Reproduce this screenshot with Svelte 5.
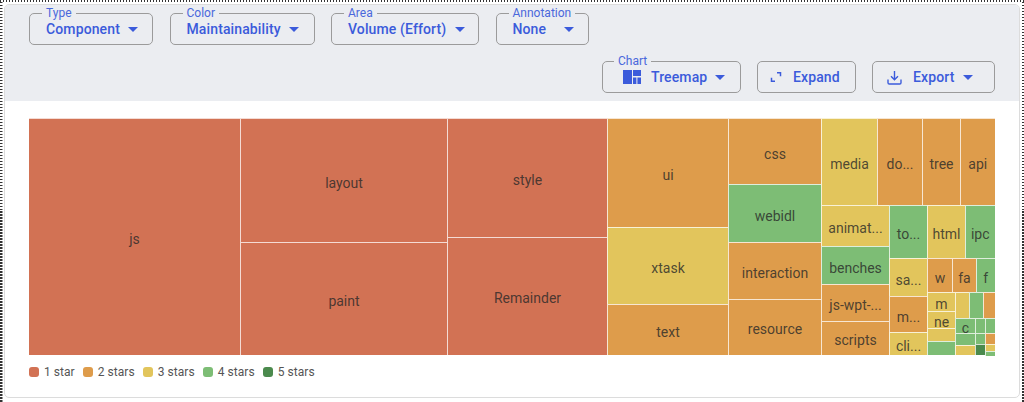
<script>
  const R = '#d27254', O = '#de9c4b', Y = '#e2c55c', G = '#7dbd75', D = '#4b8a4d';
  const X0 = 29, Y0 = 118;
  const raw = [
    [29,118,240,355,R,'js'],[240,118,447,242,R,'layout'],[240,242,447,355,R,'paint'],
    [447,118,607,237,R,'style'],[447,237,607,355,R,'Remainder'],
    [607,118,728,227,O,'ui'],[607,227,728,304,Y,'xtask'],[607,304,728,355,O,'text'],
    [728,118,821,184,O,'css'],[728,184,821,242,G,'webidl'],[728,242,821,299,O,'interaction'],[728,299,821,355,O,'resource'],
    [821,118,877,205,Y,'media'],[877,118,922,205,O,'do...'],[922,118,960,205,O,'tree'],[960,118,995,205,O,'api'],
    [821,205,889,246,Y,'animat...'],[821,246,889,284,G,'benches'],[821,284,889,321,O,'js-wpt-...'],[821,321,889,355,O,'scripts'],
    [889,205,927,258,G,'to...'],[889,258,927,296,Y,'sa...'],[889,296,927,332,O,'m...'],[889,332,927,355,Y,'cli...'],
    [927,205,965,258,Y,'html'],[965,205,995,258,G,'ipc'],
    [927,258,952,292,O,'w'],[952,258,976,292,O,'fa'],[976,258,995,292,G,'f'],
    [927,292,955,311,Y,'m'],[927,311,955,328,Y,'ne'],[927,328,955,341,Y,''],[927,341,955,355,G,''],
    [955,292,969,318,Y,''],[969,292,983,318,G,''],[983,292,995,318,O,''],
    [955,318,975,333,G,'c'],[975,318,985,333,G,''],[985,318,995,333,G,''],
    [955,333,975,345,G,''],[975,333,985,344,G,''],[985,333,995,344,O,''],
    [955,345,975,355,Y,''],[975,344,985,355,D,''],[985,344,995,351,Y,''],[985,351,995,355,G,'']
  ];
  const cells = raw.map(([a,b,c,d,color,label]) => ({
    left: a - X0, top: b - Y0,
    width: Math.min(c, 994.5) - a, height: Math.min(d, 354.5) - b,
    color, label, first: a === X0
  }));
  const legend = [['1 star',R],['2 stars',O],['3 stars',Y],['4 stars',G],['5 stars',D]];
</script>

{#snippet caret()}
  <svg class="caret" width="10" height="5" viewBox="0 0 10 5"><path d="M0 0h10L5 5z" fill="currentColor"/></svg>
{/snippet}

<div class="frame">
  <div class="card">
    <div class="toolbar">
      <div class="row">
        <fieldset class="type"><legend>Type</legend><span class="val">Component</span>{@render caret()}</fieldset>
        <fieldset class="color"><legend>Color</legend><span class="val">Maintainability</span>{@render caret()}</fieldset>
        <fieldset class="area"><legend>Area</legend><span class="val">Volume (Effort)</span>{@render caret()}</fieldset>
        <fieldset class="anno"><legend>Annotation</legend><span class="val">None</span>{@render caret()}</fieldset>
      </div>
      <div class="row end">
        <fieldset class="chart"><legend>Chart</legend>
          <svg class="ico" width="18" height="14" viewBox="0 0 18 14"><path d="M0 0h9v14H0zM10 0h8v6h-8zM10 7.5h3.4V14H10zM14.4 7.5H18V14h-3.6z" fill="currentColor"/></svg>
          <span class="val">Treemap</span>{@render caret()}
        </fieldset>
        <button class="expand">
          <svg class="ico" width="12" height="12" viewBox="0 0 12 12"><path d="M7 1.7h3.5v3.6M1.5 6.7v3.6H5" fill="none" stroke="currentColor" stroke-width="1.5"/></svg>
          <span class="val">Expand</span>
        </button>
        <button class="export">
          <svg class="ico" width="15" height="15" viewBox="0 0 15 15"><path d="M7.5 1v8.5M4 6.2l3.5 3.5L11 6.2M1 9.5v3.2q0 1.3 1.3 1.3h10.4q1.3 0 1.3-1.3V9.5" fill="none" stroke="currentColor" stroke-width="1.4"/></svg>
          <span class="val">Export</span>{@render caret()}
        </button>
      </div>
    </div>
    <div class="body">
      <div class="map">
        {#each cells as c}
          <div class="cell" class:first={c.first} style="left:{c.left}px;top:{c.top}px;width:{c.width}px;height:{c.height}px;background:{c.color}">{c.label}</div>
        {/each}
      </div>
      <div class="legend">
        {#each legend as [name, color]}
          <div class="item"><i style="background:{color}"></i>{name}</div>
        {/each}
      </div>
    </div>
  </div>
</div>

<style>
  :global(body) { margin: 0; background: #fff; overflow: hidden; }
  .frame {
    box-sizing: border-box; width: 1024px; height: 402px; padding: 4px 4px 0;
    background:
      repeating-linear-gradient(90deg, #333 0 1.5px, #fff 1.5px 3px) left top / 100% 2px no-repeat,
      repeating-linear-gradient(0deg, #333 0 1.5px, #fff 1.5px 3px) left top / 2.5px 100% no-repeat,
      repeating-linear-gradient(0deg, #333 0 1.5px, #fff 1.5px 3px) right top / 2px 100% no-repeat,
      #fff;
    font-family: Roboto, "Liberation Sans", sans-serif;
  }
  .card {
    box-sizing: border-box; height: 394px; border: 1px solid #dcdcdc; border-radius: 5px; overflow: hidden; background: #fff;
  }
  .toolbar { box-sizing: border-box; height: 96px; background: #ebedf1; padding: 2px 24px 0; }
  .row { display: flex; gap: 16.5px; }
  .end { justify-content: flex-end; margin-top: 10px; gap: 16px; }
  fieldset, button {
    box-sizing: border-box; margin: 0; height: 32px; padding: 0 0 0 16px; display: flex; align-items: center;
    border: 1px solid #9b9b9b; border-radius: 5px; background: transparent; color: #3b5bdb;
    font-family: inherit;
  }
  fieldset { height: 38px; padding-bottom: 5px; position: relative; }
  legend { font-size: 12px; line-height: 12px; padding: 0 4px; margin-left: -4px; color: #4a68dc; }
  .val { font-size: 14px; font-weight: 500; letter-spacing: 0.12px; line-height: 18px; white-space: nowrap; }
  .caret { margin-left: 8.5px; flex: none; }
  .type { width: 124px; }
  .color { width: 145px; }
  .area { width: 148px; }
  .anno { width: 93px; }
  .anno .caret { margin-left: 18px; }
  .chart { width: 139px; padding-left: 20px; }
  .chart legend { margin-left: -9px; }
  .chart .val { margin-left: 10px; }
  .chart .caret { margin-left: 8px; }
  button { margin-top: 6px; }
  .expand { width: 99px; padding-left: 12px; }
  .expand .val { margin-left: 11px; }
  .export { width: 123px; padding-left: 14px; }
  .export .val { margin-left: 11px; }
  .body { padding: 17px 24px 0; }
  .map { position: relative; height: 237px; }
  .cell {
    position: absolute; box-sizing: border-box; display: flex; align-items: center; justify-content: center;
    border-left: 1px solid rgba(255,255,255,.75); border-top: 1px solid rgba(255,255,255,.75);
    padding-top: 4px;
    font-size: 14px; color: rgba(40,40,40,.8); white-space: nowrap;
  }
  .cell.first { border-left: 0; }
  .legend { display: flex; gap: 8px; margin-top: 9px; }
  .item { display: flex; align-items: center; gap: 5px; font-size: 12px; letter-spacing: .05px; line-height: 16px; color: #555; }
  .item i { width: 10px; height: 10px; border-radius: 3px; }
</style>
